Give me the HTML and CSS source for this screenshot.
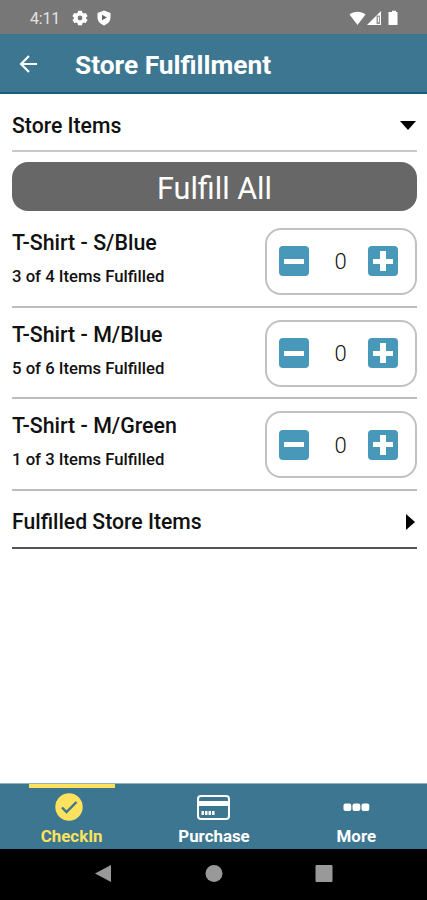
FILE: index.html
```html
<!DOCTYPE html>
<html lang="en">
<head>
<meta charset="utf-8">
<title>Store Fulfillment</title>
<link rel="stylesheet" href="styles.css">
</head>
<body>
<div class="status">
  <span class="clock">4:11</span>
  <svg class="gear" width="16" height="16" viewBox="0 0 16 16"><path fill="#fff" fill-rule="evenodd" d="M6 .8h4l.4 2 1.300.8 2-.7 1.900 3.200-1.500 1.400v1l1.500 1.400-1.900 3.200-2-.7-1.300.8-.4 2H6l-.4-2-1.300-.8-2 .7L.4 9.900l1.500-1.400v-1L.4 6.100l1.900-3.200 2 .7 1.300-.8zM8 10.400a2.400 2.400 0 1 0 0-4.800 2.400 2.400 0 0 0 0 4.800z"/></svg>
  <svg class="shield" width="14" height="16" viewBox="0 0 14 16"><path fill="#fff" d="M7 .5 13.500 3v4.500c0 3.600-2.600 6.500-6.500 8-3.900-1.500-6.500-4.400-6.500-8V3z"/><path fill="#666" d="M5 4.800 10 7.500 5 10.300z"/></svg>
  <svg class="signals" width="50" height="16" viewBox="0 0 50 16"><path fill="#fff" d="M.5 4.500C5 .7 12 .7 16.500 4.500L8.500 15z"/><path fill="#fff" d="M32 1v14H18z"/><path fill="#999" d="M27.500 5.500h3.800V15h-3.800z"/><path stroke="#fff" fill="none" d="M29.500 7v5M31.500 2v12.500H27"/><path fill="#fff" d="M41 2h2V.8h4V2h1.500v13H39.500V2z"/></svg>
</div>
<header class="bar">
  <svg width="20" height="20" viewBox="0 0 20 20"><path d="M18 10H2M10 2 2 10l8 8" fill="none" stroke="#fff" stroke-width="2.200"/></svg>
  <h1>Store Fulfillment</h1>
</header>
<main>
  <section class="group open"><span class="name">Store Items</span><svg width="16" height="9" viewBox="0 0 16 9"><path d="M0 0h16L8 9z"/></svg></section>
  <button class="all">Fulfill All</button>
  <div class="item"><div><div class="name">T-Shirt - S/Blue</div><div class="count">3 of 4 Items Fulfilled</div></div>
    <div class="stepper"><i class="sq minus"></i><span>0</span><i class="sq plus"></i></div></div>
  <div class="item"><div><div class="name">T-Shirt - M/Blue</div><div class="count">5 of 6 Items Fulfilled</div></div>
    <div class="stepper"><i class="sq minus"></i><span>0</span><i class="sq plus"></i></div></div>
  <div class="item"><div><div class="name">T-Shirt - M/Green</div><div class="count">1 of 3 Items Fulfilled</div></div>
    <div class="stepper"><i class="sq minus"></i><span>0</span><i class="sq plus"></i></div></div>
  <section class="group closed"><span class="name">Fulfilled Store Items</span><svg width="9" height="16" viewBox="0 0 9 16"><path d="M0 0v16l9-8z"/></svg></section>
</main>
<nav class="tabs">
  <div class="tab active"><svg width="28" height="28" viewBox="0 0 28 28"><circle cx="14" cy="14" r="13.700" fill="#fde25d"/><path d="m7 14.500 4.500 4.500L21.500 9" fill="none" stroke="#3d7690" stroke-width="2.400"/></svg><span>CheckIn</span></div>
  <div class="tab"><svg width="34" height="28" viewBox="0 0 34 28"><rect x="2" y="3" width="31" height="23" rx="3" fill="none" stroke="#fff" stroke-width="2"/><path d="M2 8h31v5H2z" fill="#fff"/><path d="M5.500 20h13" stroke="#fff" stroke-width="4" stroke-dasharray="2.500 1"/></svg><span>Purchase</span></div>
  <div class="tab"><svg width="28" height="28" viewBox="0 0 28 28"><g fill="#fff"><rect x="1.500" y="10.500" width="7.800" height="7.500" rx="2"/><rect x="10.500" y="10.500" width="7.800" height="7.500" rx="2"/><rect x="19.500" y="10.500" width="7.800" height="7.500" rx="2"/></g></svg><span>More</span></div>
</nav>
<footer class="system">
  <svg width="240" height="20" viewBox="0 0 240 20"><g fill="#999"><path d="M16 1v17L0 9.500z"/><circle cx="119" cy="9.500" r="8.500"/><rect x="220.500" y="1" width="17" height="17" rx="1"/></g></svg>
</footer>
</body>
</html>
```
FILE: styles.css
```css
* { box-sizing: border-box; }
body { margin: 0; width: 427px; height: 900px; display: flex; flex-direction: column; overflow: hidden; background: #fff; color: #111; font-family: Roboto, sans-serif; }
svg { display: block; flex: none; }
.status { height: 34px; background: #777; display: flex; align-items: center; padding: 2px 28px 0 30px; color: #e2e2e2; }
.clock { font-size: 16px; width: 42px; letter-spacing: -.2px; }
.shield { margin-left: 9px; }
.signals { margin-left: auto; }
.bar { height: 60px; background: #3d7690; border-bottom: 2px solid #155f7c; display: flex; align-items: center; padding-left: 19px; }
.bar svg { margin-top: 1px; }
.bar h1 { margin: 4px 0 0 36px; color: #fff; font-size: 26.300px; line-height: 30px; font-weight: 700; white-space: nowrap; }
main { flex: 1; padding: 0 10px 0 12px; }
.group { display: flex; justify-content: space-between; align-items: center; }
.group svg { fill: #000; }
.open { height: 57.500px; padding-top: 8px; border-bottom: 2px solid #c9c9c9; }
.open svg { margin-right: 1px; }
.closed { height: 58px; padding-top: 6px; border-bottom: 2px solid #555; }
.closed svg { margin-right: 2px; }
.name { font-size: 21.200px; line-height: 24px; font-weight: 500; white-space: nowrap; }
.item .name { font-size: 21.400px; margin-top: 3px; }
.all { display: block; width: 405px; height: 49px; margin: 10.800px 0 4.700px; padding: 4px 0 0; border: 0; border-radius: 16px; background: #676767; color: #fff; font: 400 30.500px/45px Roboto, sans-serif; }
.item { height: 91.700px; border-bottom: 2px solid #bdbdbd; display: flex; justify-content: space-between; padding-top: 12px; }
.count { font-size: 16.700px; line-height: 20px; font-weight: 500; margin-top: 12px; white-space: nowrap; }
.stepper { width: 152px; height: 67px; border: 2px solid #c1c1c1; border-radius: 16px; display: flex; align-items: center; justify-content: space-between; padding: 0 17px 0 12px; }
.stepper span { font-size: 22px; font-weight: 300; padding: 1px 0 0 4px; }
.sq { width: 30px; height: 30px; border-radius: 4px; background: linear-gradient(#fff, #fff) center / 20px 5px no-repeat, #4798b9; }
.plus { background: linear-gradient(#fff, #fff) center / 20px 5px no-repeat, linear-gradient(#fff, #fff) center / 6px 20px no-repeat, #4798b9; }
.tabs { height: 66px; background: #3d7690; border-top: 1px solid #8eb2bf; display: grid; grid-template-columns: repeat(3, 1fr); color: #fff; }
.tab { display: flex; flex-direction: column; align-items: center; padding-top: 9px; font-size: 16.900px; line-height: 20px; font-weight: 700; }
.tab span { margin: 5px 0 0 1px; }
.active { color: #fde25d; background: linear-gradient(#fde25d, #fde25d) 29px 0 / 86px 4px no-repeat; }
.active svg { margin-right: 4px; }
.system { height: 51px; background: #000; padding: 15px 0 0 95px; }
```
